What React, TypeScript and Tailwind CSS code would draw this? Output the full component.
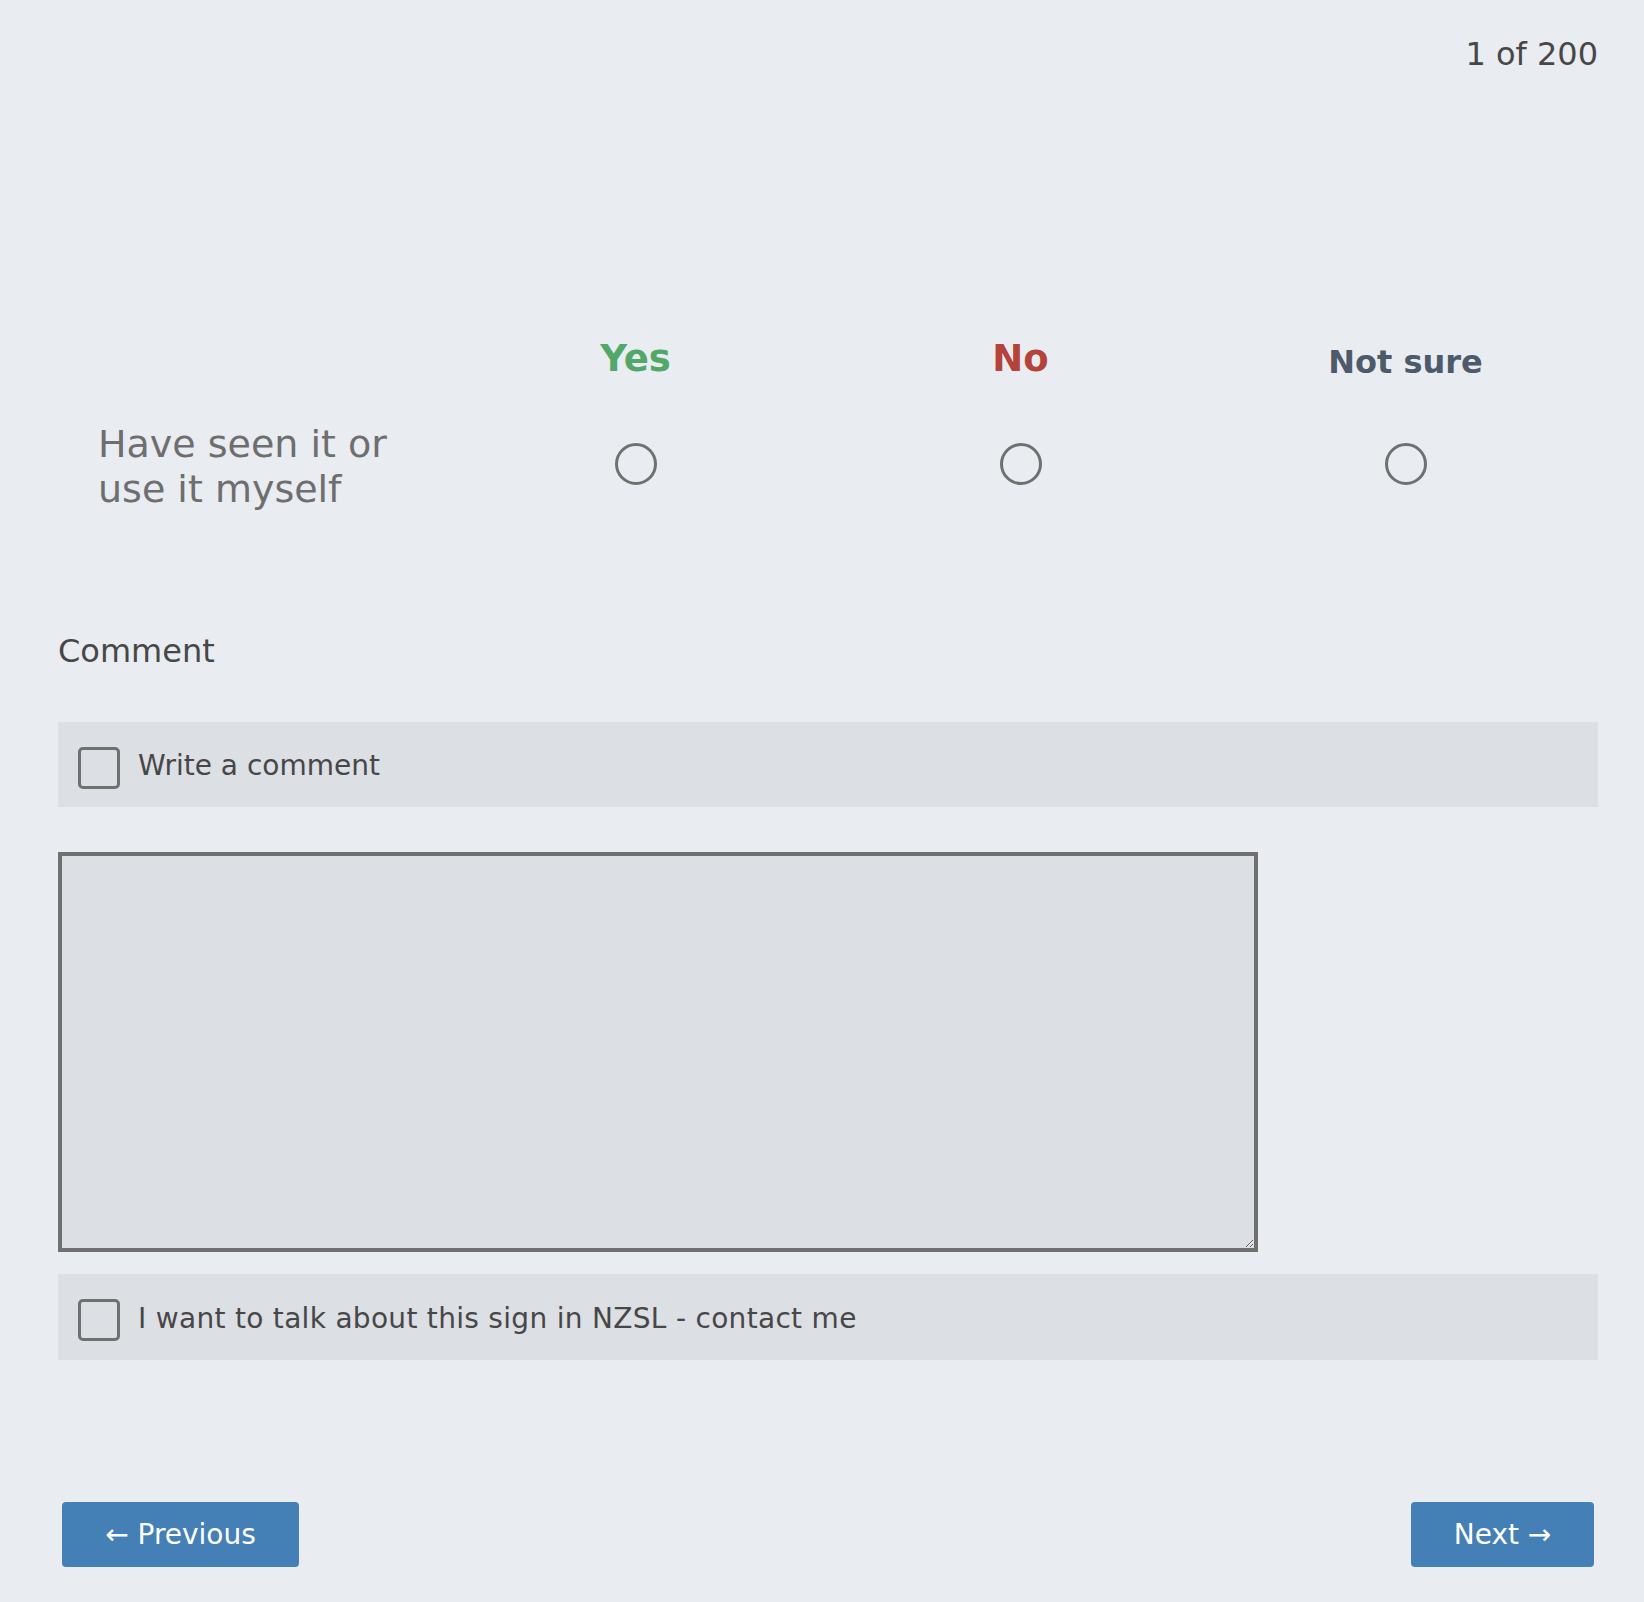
import React from 'react';

const columns = [
  { label: 'Yes', className: 'text-[37px] text-[#52a869]' },
  { label: 'No', className: 'text-[37px] text-[#b4433a]' },
  { label: 'Not sure', className: 'text-[32px] text-[#4d5a6a] translate-y-[2px]' },
];

function Checkbox() {
  return <div className="w-[42px] h-[42px] mt-[6px] shrink-0 rounded-[5px] border-[3.5px] border-[#707070]" />;
}

function Radio() {
  return <div className="w-[42px] h-[42px] mb-[7px] rounded-full border-[3.5px] border-[#707070]" />;
}

export default function App() {
  return (
    <div
      className="min-h-screen bg-[#e9ecf1] pl-[58px] pr-[46px] pt-[35px] pb-[36px]"
      style={{ fontFamily: '"DejaVu Sans", Verdana, sans-serif' }}
    >
      <div className="text-right text-[32px] leading-[1.2] text-[#474747]">1 of 200</div>

      <div className="grid grid-cols-4 items-baseline mt-[264px] font-bold leading-[1.2]">
        <div />
        {columns.map((c) => (
          <div key={c.label} className={`text-center ${c.className}`}>
            {c.label}
          </div>
        ))}
      </div>

      <div className="grid grid-cols-4 items-center mt-[40px]">
        <div className="pl-[40px] text-[38px] leading-[1.2] text-[#6e6e6e]">
          Have seen it or
          <br />
          use it myself
        </div>
        {columns.map((c) => (
          <div key={c.label} className="flex justify-center">
            <Radio />
          </div>
        ))}
      </div>

      <div className="mt-[119px] text-[32px] leading-[1.2] text-[#474747]">Comment</div>

      <label className="mt-[52px] h-[85px] flex items-center gap-[18px] pl-[20px] bg-[#dcdfe4] text-[28px] text-[#474747]">
        <Checkbox />
        <span className="mt-[3px]">Write a comment</span>
      </label>

      <textarea className="block mt-[45px] w-[1200px] h-[400px] bg-[#dcdfe4] border-[4px] border-[#707070] outline-none" />

      <label className="mt-[22px] h-[86px] flex items-center gap-[18px] pl-[20px] bg-[#dcdfe4] text-[28px] text-[#474747]">
        <Checkbox />
        <span className="mt-[3px] tracking-[0.3px]">I want to talk about this sign in NZSL - contact me</span>
      </label>

      <div className="mt-[142px] flex justify-between px-[4px]">
        <button className="w-[237px] h-[65px] rounded-[4px] bg-[#4480b6] text-white text-[28px]">
          ← Previous
        </button>
        <button className="w-[183px] h-[65px] rounded-[4px] bg-[#4480b6] text-white text-[28px]">
          Next →
        </button>
      </div>
    </div>
  );
}
